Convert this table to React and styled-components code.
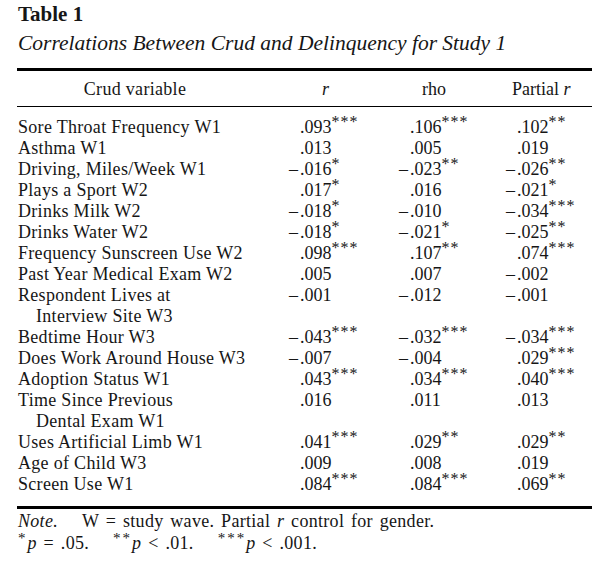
import React from "react";
import styled, { createGlobalStyle } from "styled-components";

const rows = [
  [["Sore Throat Frequency W1"], ".093***", ".106***", ".102**"],
  [["Asthma W1"], ".013", ".005", ".019"],
  [["Driving, Miles/Week W1"], "-.016*", "-.023**", "-.026**"],
  [["Plays a Sport W2"], ".017*", ".016", "-.021*"],
  [["Drinks Milk W2"], "-.018*", "-.010", "-.034***"],
  [["Drinks Water W2"], "-.018*", "-.021*", "-.025**"],
  [["Frequency Sunscreen Use W2"], ".098***", ".107**", ".074***"],
  [["Past Year Medical Exam W2"], ".005", ".007", "-.002"],
  [["Respondent Lives at", "Interview Site W3"], "-.001", "-.012", "-.001"],
  [["Bedtime Hour W3"], "-.043***", "-.032***", "-.034***"],
  [["Does Work Around House W3"], "-.007", "-.004", ".029***"],
  [["Adoption Status W1"], ".043***", ".034***", ".040***"],
  [["Time Since Previous", "Dental Exam W1"], ".016", ".011", ".013"],
  [["Uses Artificial Limb W1"], ".041***", ".029**", ".029**"],
  [["Age of Child W3"], ".009", ".008", ".019"],
  [["Screen Use W1"], ".084***", ".084***", ".069**"],
];

const Value = ({ text }) => {
  const negative = text.startsWith("-");
  const body = text.replace("-", "");
  const stars = (body.match(/\*+$/) || [""])[0];
  const digits = body.slice(0, body.length - stars.length);
  return (
    <NumCell>
      <Sign>{negative ? "\u2013" : ""}</Sign>
      {digits}
      {stars && <Stars>{stars}</Stars>}
    </NumCell>
  );
};

const App = () => {
  return (
    <>
      <GlobalStyle />
      <Page>
        <Title>Table 1</Title>
        <Caption>Correlations Between Crud and Delinquency for Study 1</Caption>
        <Rule thick />
        <HeadRow>
          <LabelHead>Crud variable</LabelHead>
          <ColHead pad={33}>
            <i>r</i>
          </ColHead>
          <ColHead pad={23}>rho</ColHead>
          <ColHead pad={6}>
            Partial <i>r</i>
          </ColHead>
        </HeadRow>
        <Rule />
        <Body>
          {rows.map(([label, r, rho, partial]) => (
            <Row key={label[0]}>
              <Label>
                {label[0]}
                {label[1] && (
                  <>
                    <br />
                    {label[1]}
                  </>
                )}
              </Label>
              <Value text={r} />
              <Value text={rho} />
              <Value text={partial} />
            </Row>
          ))}
        </Body>
        <Rule thick />
        <Notes>
          <NoteLine>
            <i>Note.</i>
            <Gap>W = study wave. Partial <i>r</i> control for gender.</Gap>
          </NoteLine>
          <NoteLine>
            <NoteStar>*</NoteStar>
            <i>p</i> = .05.
            <Gap>
              <NoteStar>**</NoteStar>
              <i>p</i> &lt; .01.
            </Gap>
            <Gap>
              <NoteStar>***</NoteStar>
              <i>p</i> &lt; .001.
            </Gap>
          </NoteLine>
        </Notes>
      </Page>
    </>
  );
};

const GlobalStyle = createGlobalStyle`
  body {
    margin: 0;
    background: #fff;
    color: #161616;
    font-family: "Liberation Serif", "Times New Roman", serif;
  }
`;
const Page = styled.div`
  width: 575px;
  padding: 2px 0 0 17px;
`;
const Title = styled.div`
  font-size: 21px;
  font-weight: bold;
  line-height: 24px;
  padding-left: 1px;
`;
const Caption = styled.div`
  font-size: 21.5px;
  font-style: italic;
  line-height: 28px;
  padding-left: 1px;
  margin: 3px 0 11px;
`;
const Rule = styled.div`
  height: ${(p) => (p.thick ? "2.5px" : "1.6px")};
  background: #000;
`;
const grid = `
  display: grid;
  grid-template-columns: 272px 110px 107px 86px;
  font-size: 18px;
  line-height: 21px;
`;
const HeadRow = styled.div`
  ${grid}
  padding: 8px 0 6px;
`;
const LabelHead = styled.div`
  width: 236px;
  text-align: center;
  letter-spacing: 0.3px;
`;
const ColHead = styled.div`
  padding-left: ${(p) => p.pad}px;
  white-space: nowrap;
`;
const Body = styled.div`
  padding: 10px 0 11px;
`;
const Row = styled.div`
  ${grid}
`;
const Label = styled.div`
  padding-left: 19px;
  text-indent: -18px;
  letter-spacing: 0.3px;
`;
const NumCell = styled.div`
  white-space: nowrap;
`;
const Sign = styled.span`
  display: inline-block;
  width: 11px;
`;
const Stars = styled.sup`
  font-size: 16px;
  letter-spacing: 1px;
  vertical-align: 6px;
  line-height: 0;
`;
const Notes = styled.div`
  padding: 1px 0 0 1px;
  font-size: 18px;
  line-height: 22px;
  letter-spacing: 0.3px;
  word-spacing: 2px;
`;
const NoteLine = styled.div`
  white-space: nowrap;
`;
const Gap = styled.span`
  margin-left: 24px;
`;
const NoteStar = styled.sup`
  font-size: 15px;
  letter-spacing: 2px;
  vertical-align: 6px;
  line-height: 0;
`;

export default App;
